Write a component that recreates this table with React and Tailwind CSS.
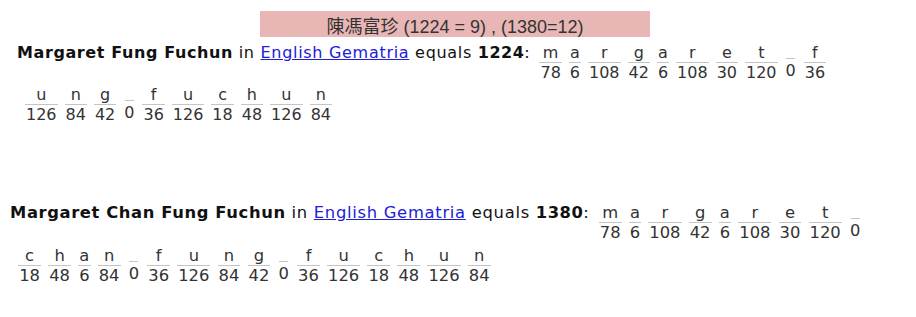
import React from "react";

const val = (ch) => (ch === " " ? 0 : (ch.charCodeAt(0) - 96) * 6);

function Block({ ch }) {
  if (ch === " ") {
    return (
      <div className="flex flex-col items-center px-[0.0625em]">
        <div className="h-[0.9375em] w-[0.5625em] border-b border-[#c4c4c4]" />
        <div className="mt-[0.125em] leading-[1.1875em]">0</div>
      </div>
    );
  }
  return (
    <div className="flex flex-col">
      <div className="h-[1.1875em] leading-[1.125em] border-b border-[#c4c4c4] text-center">{ch}</div>
      <div className="leading-[1.1875em] text-center px-[0.0625em]">{val(ch)}</div>
    </div>
  );
}

function Blocks({ text }) {
  return text.split("").map((ch, i) => <Block key={i} ch={ch} />);
}

function Paragraph({ name, total, row1, row2, className }) {
  return (
    <div className={className}>
      <div className="flex items-start gap-[0.4375em]">
        <div className="leading-[1.125em] whitespace-nowrap text-[#111] tracking-[0.04375em] mr-[0.125em]">
          <b className="tracking-[0.0375em]">{name}</b> in{" "}
          <a href="#" className="text-[#2020d8] underline">English Gematria</a> equals{" "}
          <b className="tracking-[0.03125em]">{total}</b>:
        </div>
        <div className="flex items-start gap-[0.4375em] text-[#333]">
          <Blocks text={row1} />
        </div>
      </div>
      <div className="flex items-start gap-[0.4375em] text-[#333] ml-[0.5em] mt-[0.25em]">
        <Blocks text={row2} />
      </div>
    </div>
  );
}

export default function App() {
  return (
    <div className="w-[916px] h-[317px] bg-white overflow-hidden">
      <div className="ml-[260px] mt-[11px] w-[390px] h-[26px] bg-[#e9b6b6] text-center text-[18px] leading-[20px] pt-[6px] text-[#333] font-['Liberation_Sans','Noto_Sans_CJK_TC',sans-serif]">
        陳馮富珍 (1224 = 9) , (1380=12)
      </div>
      <div className="font-['DejaVu_Sans',Verdana,sans-serif]">
        <Paragraph
          className="text-[16px] ml-[17px] mt-[7px]"
          name="Margaret Fung Fuchun"
          total="1224"
          row1="margaret f"
          row2="ung fuchun"
        />
        <Paragraph
          className="text-[16.35px] ml-[10px] mt-[80px]"
          name="Margaret Chan Fung Fuchun"
          total="1380"
          row1="margaret "
          row2="chan fung fuchun"
        />
      </div>
    </div>
  );
}
